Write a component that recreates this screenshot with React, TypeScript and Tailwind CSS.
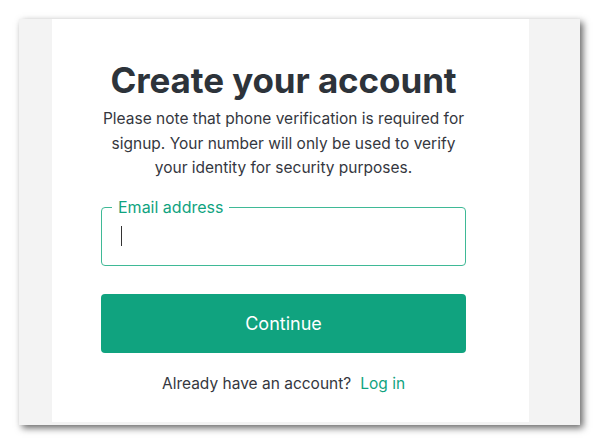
export default function App() {
  return (
    <div className="w-[600px] h-[446px] bg-white pt-[19px] pl-[19px]" style={{ fontFamily: "Inter, 'Liberation Sans', sans-serif" }}>
      <div className="w-[561px] h-[406px] bg-[#f3f3f3] flex shadow-[3px_3px_7px_rgba(0,0,0,0.6)]">
        <div className="ml-[33px] w-[477px] h-[403px] bg-white">
          <div className="ml-[49px] w-[365px] flex flex-col items-center">
            <h1 className="mt-[38px] text-[35px] leading-[46px] font-bold text-[#2d333a] tracking-[-0.1px]">
              Create your account
            </h1>
            <p className="mt-[4px] text-[15.5px] leading-[24.5px] text-[#353740] text-center">
              Please note that phone verification is required for signup. Your number will only be used to verify your identity for security purposes.
            </p>
            <div className="relative mt-[26px] w-full h-[59px] border border-[#3fb996] rounded-[4px] flex items-center pl-[19px]">
              <span className="absolute -top-[12px] left-[10px] bg-white px-[6px] text-[16px] leading-[22px] text-[#10a37f]">
                Email address
              </span>
              <span className="w-px h-[20px] bg-[#333]" />
            </div>
            <button className="mt-[28px] w-full h-[59px] bg-[#10a37f] rounded-[4px] text-white text-[18px]">
              Continue
            </button>
            <p className="mt-[21px] text-[15.5px] leading-[20px] text-[#353740]">
              Already have an account?<span className="ml-[9px] text-[#10a37f]">Log in</span>
            </p>
          </div>
        </div>
      </div>
    </div>
  );
}
